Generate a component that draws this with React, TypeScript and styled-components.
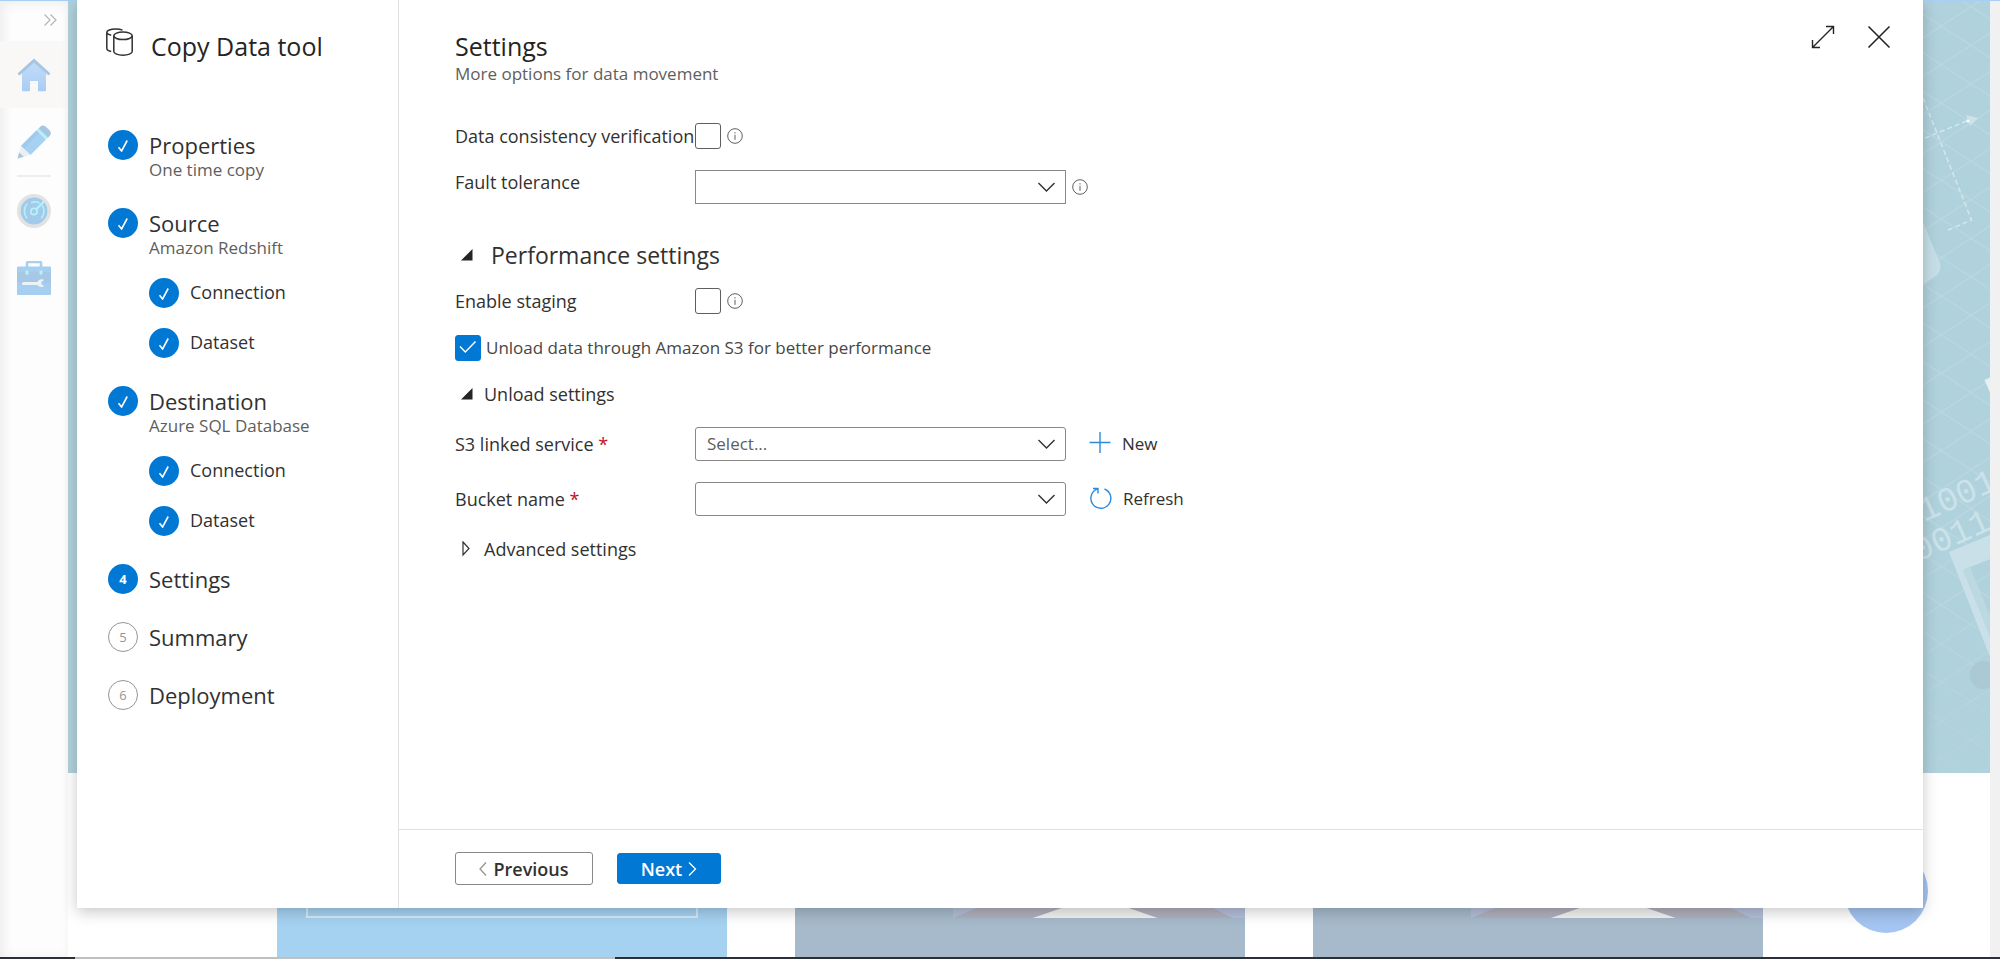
import React from "react";
import styled, { createGlobalStyle, css } from "styled-components";

const GlobalStyle = createGlobalStyle`
  *, *::before, *::after { box-sizing: border-box; }
  body {
    margin: 0;
    background: #fff;
    color: #323130;
    font-family: "Open Sans", "Noto Sans", sans-serif;
    font-size: 17px;
    line-height: 24px;
  }
  button, select, input { font: inherit; color: inherit; }
  h1, h2, h3, p, ol { margin: 0; padding: 0; font: inherit; list-style: none; }
`;

/* ---------- Page behind the dialog ---------- */

const Page = styled.div`
  position: relative;
  display: flex;
  flex-direction: column;
  min-height: 100vh;
  overflow: hidden;
`;

const TopEdge = styled.div`
  height: 1px;
  background: #a5d0f3;
`;

const Workspace = styled.div`
  flex: 1;
  display: flex;
`;

const Rail = styled.nav`
  width: 68px;
  display: flex;
  flex-direction: column;
  background: #fdfdfd;
  box-shadow: inset 3px 2px 12px #ececec;
`;

const RailButton = styled.button<{ $active?: boolean }>`
  width: 67px;
  height: 67px;
  padding: 0;
  display: grid;
  place-items: center;
  border: 0;
  background: ${(p) => (p.$active ? "#faf8f7" : "transparent")};
`;

const RailToggle = styled.button`
  height: 40px;
  padding: 0 11px 2px 0;
  display: flex;
  align-items: center;
  justify-content: flex-end;
  border: 0;
  background: transparent;
`;

const RailDivider = styled.hr`
  width: 34px;
  height: 2px;
  margin: 0 17px;
  border: 0;
  background: #eeeeee;
`;

const Home = styled.div`
  flex: 1;
  display: flex;
  flex-direction: column;
`;

const Hero = styled.div`
  flex: 1;
  display: flex;
  justify-content: flex-end;
  background: #b0d2dc;

  svg {
    overflow: visible;
  }
`;

const Cards = styled.div`
  display: flex;
  gap: 68px;
  height: 184px;
  padding: 68px 227px 0 209px;
`;

const Card = styled.div<{ $tone: string }>`
  flex: 1;
  display: flex;
  align-items: flex-start;
  justify-content: flex-end;
  background: ${(p) => p.$tone};
`;

const CardOutline = styled.div`
  flex: 1;
  height: 77px;
  margin: 0 29px;
  border: 2px solid #d5e9f8;
`;

const ScrollTrack = styled.div`
  position: relative;
  width: 10px;
  background: #f1f1f1;
`;

const Taskbar = styled.div`
  height: 2px;
  display: flex;
  background: #2b3036;
`;

const TaskbarItem = styled.div`
  width: 27%;
  margin-left: 75px;
  background: #c0c0c0;
`;

const ChatBubble = styled.div`
  position: absolute;
  right: 72px;
  bottom: 26px;
  width: 84px;
  height: 84px;
  border-radius: 50%;
  background: #a4c4f1;
`;

/* ---------- Dialog ---------- */

const Dialog = styled.section`
  position: absolute;
  inset: 0 77px 51px;
  display: flex;
  background: #fff;
  box-shadow: 0 4px 14px rgba(0, 0, 0, 0.22);
`;

const Sidebar = styled.aside`
  width: 322px;
  flex: none;
  padding: 28px 0 0 28px;
  border-right: 1px solid #e1e1e1;
`;

const ToolHeader = styled.header`
  display: flex;
  gap: 17px;
  height: 102px;
`;

const ToolTitle = styled.h1`
  margin-top: 3px;
  font-size: 25px;
  line-height: 30px;
  font-weight: 500;
  color: #252423;
`;

const Steps = styled.ol`
  display: flex;
  flex-direction: column;
  gap: 28px;
  padding-left: 3px;
`;

const Step = styled.li`
  display: grid;
  grid-template-columns: 30px 1fr;
  column-gap: 11px;
`;

const SubSteps = styled.ol`
  grid-column: 2;
  display: flex;
  flex-direction: column;
  gap: 20px;
  margin-top: 20px;
`;

const Badge = styled.span<{ $state: "done" | "current" | "todo" }>`
  width: 30px;
  height: 30px;
  display: grid;
  place-items: center;
  border-radius: 50%;
  font-size: 13px;
  line-height: 16px;
  ${(p) =>
    p.$state === "todo"
      ? css`
          border: 1px solid #979593;
          color: #979593;
        `
      : css`
          background: #0078d4;
          color: #fff;
          font-weight: 700;
        `}
`;

const StepTitle = styled.div<{ $sub?: boolean }>`
  font-size: ${(p) => (p.$sub ? 18 : 22)}px;
  line-height: ${(p) => (p.$sub ? 28 : 30)}px;
  font-weight: 500;
`;

const StepNote = styled.div`
  grid-column: 2;
  line-height: 20px;
  color: #605e5c;
`;

const Main = styled.main`
  flex: 1;
  display: flex;
  flex-direction: column;
`;

const Heading = styled.header`
  display: flex;
  justify-content: space-between;
  padding: 21px 28px 0 56px;
`;

const Title = styled.h2`
  margin-top: 10px;
  font-size: 25px;
  line-height: 30px;
  font-weight: 500;
  color: #252423;
`;

const Subtitle = styled.p`
  line-height: 26px;
  color: #605e5c;
`;

const WindowActions = styled.div`
  display: flex;
  gap: 24px;
`;

const IconButton = styled.button`
  width: 32px;
  height: 32px;
  padding: 0;
  display: grid;
  place-items: center;
  border: 0;
  background: transparent;
`;

const Form = styled.form`
  flex: 1;
  display: flex;
  flex-direction: column;
  align-items: flex-start;
  gap: 21px;
  padding: 36px 56px 0;
`;

const Row = styled.div<{ $labelTop?: boolean }>`
  display: grid;
  grid-template-columns: 240px auto auto;
  align-items: center;

  > label {
    align-self: ${(p) => (p.$labelTop ? "start" : "center")};
  }
`;

const Label = styled.label`
  font-size: 18px;
  font-weight: 500;
  white-space: nowrap;
`;

const Required = styled.span`
  color: #c50f1f;
`;

const CheckWrap = styled.span`
  position: relative;
  display: block;
  width: 26px;
  height: 26px;

  svg {
    position: absolute;
    inset: 0;
    pointer-events: none;
  }
`;

const CheckInput = styled.input`
  appearance: none;
  display: block;
  width: 26px;
  height: 26px;
  margin: 0;
  border: 1px solid #605e5c;
  border-radius: 3px;
  background: #fff;

  &:checked {
    border-color: #0078d4;
    background: #0078d4;
  }
`;

const CheckRow = styled.div`
  display: flex;
  align-items: center;
  gap: 5px;
  color: #484644;
`;

const SelectWrap = styled.span`
  position: relative;
  display: block;

  svg {
    position: absolute;
    right: 10px;
    top: 10px;
    pointer-events: none;
  }
`;

const SelectInput = styled.select<{ $square?: boolean }>`
  appearance: none;
  display: block;
  width: 371px;
  height: 34px;
  padding: 0 36px 0 11px;
  border: 1px solid #8a8886;
  border-radius: ${(p) => (p.$square ? 0 : 3)}px;
  background: #fff;
  color: #605e5c;
`;

const InfoButton = styled.button`
  width: 16px;
  height: 16px;
  margin-left: 6px;
  padding: 0;
  border: 0;
  background: transparent;

  svg {
    display: block;
  }
`;

const LinkButton = styled.button`
  display: flex;
  align-items: center;
  gap: 11px;
  margin-left: 23px;
  padding: 0;
  border: 0;
  background: transparent;
`;

const SectionToggle = styled.button<{ $large?: boolean }>`
  display: flex;
  align-items: center;
  gap: ${(p) => (p.$large ? 18 : 11)}px;
  height: 24px;
  margin-top: ${(p) => (p.$large ? 18 : 0)}px;
  padding: 0 0 0 6px;
  border: 0;
  background: transparent;
  font-size: ${(p) => (p.$large ? 23 : 18)}px;
  font-weight: 500;
`;

const Footer = styled.footer`
  display: flex;
  align-items: center;
  gap: 24px;
  height: 79px;
  padding: 0 56px 1px;
  border-top: 1px solid #e1e1e1;
`;

const FooterButton = styled.button<{ $primary?: boolean }>`
  display: flex;
  align-items: center;
  justify-content: center;
  gap: 6px;
  width: ${(p) => (p.$primary ? 104 : 138)}px;
  height: ${(p) => (p.$primary ? 31 : 33)}px;
  padding: 0;
  border: 1px solid ${(p) => (p.$primary ? "#0078d4" : "#8a8886")};
  border-radius: 3px;
  background: ${(p) => (p.$primary ? "#0078d4" : "#fff")};
  color: ${(p) => (p.$primary ? "#fff" : "#323130")};
  font-size: 18px;
  font-weight: 600;
`;

/* ---------- Icons ---------- */

const DatabaseIcon = () => (
  <svg width="29" height="28" viewBox="0 0 29 28" fill="none" stroke="#323130" strokeWidth="1.5">
    <ellipse cx="18" cy="7.8" rx="9.2" ry="3.8" />
    <path d="M8.8 7.8V23.600c0 2 4.100 3.600 9.200 3.600s9.200-1.600 9.200-3.600V7.800" />
    <path d="M17.500 2.200C15.500 1.200 13 1 10.500 1 5.500 1 1.800 2.500 1.800 4.300V20.500c0 1.400 1.800 2.400 4.400 3M1.800 4.300c0 1.400 1.800 2.300 4.400 2.900" />
  </svg>
);

const BadgeCheck = () => (
  <svg width="12" height="14" viewBox="0 0 12 14" fill="none" stroke="#fff" strokeWidth="1.600">
    <path d="M1.500 9.200 4.600 13 10.200 2.500" />
  </svg>
);

const BoxCheck = () => (
  <svg width="26" height="26" viewBox="0 0 26 26" fill="none" stroke="#fff" strokeWidth="1.500">
    <path d="M5 11.500 10.300 17 20.500 6.500" />
  </svg>
);

const Chevron = () => (
  <svg width="19" height="14" viewBox="0 0 19 14" fill="none" stroke="#323130" strokeWidth="1.400">
    <path d="M1.500 3 9.500 11 17.500 3" />
  </svg>
);

const InfoIcon = () => (
  <svg width="16" height="16" viewBox="0 0 16 16" fill="none" stroke="#605e5c">
    <circle cx="8" cy="8" r="7.300" />
    <path d="M8 6.800V11.800M8 4.200V5.500" />
  </svg>
);

const ExpandedIcon = () => (
  <svg width="12" height="12" viewBox="0 0 12 12">
    <path d="M11.500 0V11.500H0Z" fill="#252423" />
  </svg>
);

const CollapsedIcon = () => (
  <svg width="12" height="16" viewBox="0 0 12 16" fill="none" stroke="#323130" strokeWidth="1.200">
    <path d="M2 1 8 7.500 2 14Z" />
  </svg>
);

const PlusIcon = () => (
  <svg width="22" height="24" viewBox="0 0 22 24" stroke="#2b8bde" strokeWidth="1.400">
    <path d="M11 0V21M0.500 10.500H21.500" />
  </svg>
);

const RefreshIcon = () => (
  <svg width="23" height="24" viewBox="0 0 23 24" fill="none" stroke="#2b8bde" strokeWidth="1.400">
    <path d="M15.500 2A10 10 0 1 1 8.500 1.900" />
    <path d="M4 1.500H9V6.500" />
  </svg>
);

const ExpandIcon = () => (
  <svg width="24" height="24" viewBox="0 0 24 24" fill="none" stroke="#252423" strokeWidth="1.400">
    <path d="M1.500 22.500 22.500 1.500M15 1.500H22.500V9M1.500 15V22.500H9" />
  </svg>
);

const CloseIcon = () => (
  <svg width="24" height="24" viewBox="0 0 24 24" stroke="#252423" strokeWidth="1.600">
    <path d="M1.500 1.500 22.500 22.500M22.500 1.500 1.500 22.500" />
  </svg>
);

const ArrowLeft = () => (
  <svg width="8" height="16" viewBox="0 0 8 16" fill="none" stroke="#979593" strokeWidth="1.300">
    <path d="M7 1.500 1 8 7 14.500" />
  </svg>
);

const ArrowRight = () => (
  <svg width="9" height="16" viewBox="0 0 9 16" fill="none" stroke="#fff" strokeWidth="1.300">
    <path d="M1 1.500 7.500 8 1 14.500" />
  </svg>
);

const DoubleChevron = () => (
  <svg width="14" height="12" viewBox="0 0 14 12" fill="none" stroke="#b5b5b5" strokeWidth="1.200">
    <path d="M1.500 0.500 7 6 1.500 11.500M7.500 0.500 13 6 7.500 11.500" />
  </svg>
);

const HomeIcon = () => (
  <svg width="34" height="34" viewBox="0 0 34 34">
    <defs>
      <linearGradient id="house" x1="0" y1="0" x2="0" y2="1">
        <stop offset="0" stopColor="#c2dcfa" />
        <stop offset="1" stopColor="#a8cdf3" />
      </linearGradient>
    </defs>
    <path d="M5 15 17 4 29 15V32.500a.8.8 0 0 1-.8.8H21V23H13V33.300H5.800a.8.800 0 0 1-.8-.800Z" fill="url(#house)" />
    <path d="M17 .5 33.500 15.500 31.500 17.500 17 4.800 2.500 17.500.5 15.500Z" fill="#a6c6e2" />
  </svg>
);

const PencilIcon = () => (
  <svg width="34" height="34" viewBox="0 0 34 34">
    <path d="M23.500 1.500C25 0 27 .1 28.500 1.500L32.800 5.500C34.200 7 34.200 9 33 10.500L30.500 13.200 20.500 4.400Z" fill="#a6c6e2" />
    <path d="M21.500 3.400 31 12.400 29 14.400 19.400 5.500Z" fill="#b8f0f8" />
    <path d="M19.400 5.500 29 14.400 13.500 30 4 21Z" fill="#a6d1f2" />
    <path d="M19.400 5.500 22 8 7 23.800 4 21Z" fill="#a2c9ea" />
    <path d="M4 21 13.500 30 .500 33.500Z" fill="#eceef0" />
    <path d="M2.200 27.500 6.800 31.800 .500 33.500Z" fill="#a6c6e2" />
  </svg>
);

const GaugeIcon = () => (
  <svg width="34" height="34" viewBox="0 0 34 34" fill="none">
    <circle cx="17" cy="17" r="15.200" fill="#a2caea" stroke="#e2e2e2" strokeWidth="3.600" />
    <path d="M14 8.800C16.500 7.700 20 7.800 22.500 9M10.300 9.500C6.500 13.500 6.500 20 10 24.500M25.200 11.500C27.800 15 27.500 20.500 24.200 24.500" stroke="#b5eef8" strokeWidth="1.700" />
    <circle cx="17" cy="17.500" r="3.100" stroke="#b5f1f9" strokeWidth="1.800" />
    <path d="M19.200 15.200 27 7.500" stroke="#b5f1f9" strokeWidth="2.300" />
  </svg>
);

const ToolboxIcon = () => (
  <svg width="34" height="34" viewBox="0 0 34 34">
    <path d="M10 7V2.200Q10 1 11.200 1H22.800Q24 1 24 2.200V7" fill="none" stroke="#a6d0f0" strokeWidth="2.600" />
    <rect x="0" y="5.500" width="34" height="28.500" rx="1" fill="#a5cef0" />
    <rect x="0" y="11" width="34" height="11" fill="#a6c8e5" />
    <path d="M8.500 9.500H11.500V13L10 14 8.500 13ZM22.500 9.500H25.500V13L24 14 22.500 13Z" fill="#b6f0f8" />
    <path d="M6.500 21H20.500C21.500 18.300 25 17.500 27.300 18.900L24.500 20.800V23.400L27.300 25.300C25 26.700 21.500 25.800 20.500 24H6.500A1.500 1.500 0 0 1 6.500 21Z" fill="#edf2f7" />
  </svg>
);

const HeroArt = () => (
  <svg width="67" height="772" viewBox="0 0 67 772" aria-hidden="true">
    <defs>
      <pattern id="grid" x="18.300" y="25" width="59.400" height="38.600" patternUnits="userSpaceOnUse">
        <path d="M0 0 59.400 38.600M0 38.600 59.400 0" stroke="#bfdae3" strokeWidth="1" />
      </pattern>
      <linearGradient id="fade" x1="0" y1="0" x2="0" y2="1">
        <stop offset="0.700" stopColor="#fff" />
        <stop offset="1" stopColor="#fff" stopOpacity="0.350" />
      </linearGradient>
      <mask id="gridMask">
        <rect width="67" height="772" fill="url(#fade)" />
      </mask>
    </defs>
    <rect width="67" height="772" fill="url(#grid)" mask="url(#gridMask)" />
    <g fill="none" stroke="#d3e7ec" strokeWidth="1.500" strokeDasharray="5 3">
      <path d="M0 97 48.500 219 23 230" />
      <path d="M2 137 46 119" />
    </g>
    <path d="M43 114 55 117 47 125Z" fill="#cde3ea" />
    <circle cx="45" cy="120" r="1.500" fill="#fff" />
    <path d="M0 221 17 262Q19 268 14 274L0 284Z" fill="#c6dfe7" />
    <path d="M61.500 379 68 376V394Z" fill="#e4f0f4" />
    <g fill="#cbe2ea" fontFamily="Liberation Mono, monospace" fontSize="34">
      <text transform="translate(1 521) rotate(-24)">1001</text>
      <text transform="translate(-5 561) rotate(-24)">0011</text>
    </g>
    <path d="M26 551 67 534V558L40 569 67 634V656Z" fill="#c9e0e8" />
    <path d="M40 569 47 566 67 615V636Z" fill="#bcd9e2" />
    <path d="M67 661.500A14 14 0 1 0 67 686.500Z" fill="#abc9d4" />
  </svg>
);

const CardArt = () => (
  <svg width="65%" height="77" viewBox="0 0 293 77" preserveAspectRatio="none" aria-hidden="true">
    <rect width="293" height="77" fill="#b4bfda" />
    <path d="M0 77 70 48H223L280 77Z" fill="#b0b1bd" />
    <path d="M80 77 135 58H150L205 77Z" fill="#f3f3f3" />
  </svg>
);

/* ---------- Pieces ---------- */

type CheckboxProps = { id: string; checked?: boolean };

const Checkbox = ({ id, checked = false }: CheckboxProps) => {
  const [on, setOn] = React.useState(checked);
  return (
    <CheckWrap>
      <CheckInput id={id} type="checkbox" checked={on} onChange={() => setOn(!on)} />
      {on && <BoxCheck />}
    </CheckWrap>
  );
};

type SelectProps = { id: string; placeholder?: string; square?: boolean };

const Select = ({ id, placeholder = "", square }: SelectProps) => (
  <SelectWrap>
    <SelectInput id={id} $square={square} defaultValue="">
      <option value="">{placeholder}</option>
    </SelectInput>
    <Chevron />
  </SelectWrap>
);

const Info = () => (
  <InfoButton type="button" aria-label="More information">
    <InfoIcon />
  </InfoButton>
);

type StepData = {
  title: string;
  note?: string;
  state: "done" | "current" | "todo";
  children?: string[];
};

const steps: StepData[] = [
  { title: "Properties", note: "One time copy", state: "done" },
  { title: "Source", note: "Amazon Redshift", state: "done", children: ["Connection", "Dataset"] },
  { title: "Destination", note: "Azure SQL Database", state: "done", children: ["Connection", "Dataset"] },
  { title: "Settings", state: "current" },
  { title: "Summary", state: "todo" },
  { title: "Deployment", state: "todo" },
];

const StepList = () => (
  <Steps>
    {steps.map((step, index) => (
      <Step key={step.title}>
        <Badge $state={step.state}>{step.state === "done" ? <BadgeCheck /> : index + 1}</Badge>
        <StepTitle>{step.title}</StepTitle>
        {step.note && <StepNote>{step.note}</StepNote>}
        {step.children && (
          <SubSteps>
            {step.children.map((child) => (
              <Step key={child}>
                <Badge $state="done">
                  <BadgeCheck />
                </Badge>
                <StepTitle $sub>{child}</StepTitle>
              </Step>
            ))}
          </SubSteps>
        )}
      </Step>
    ))}
  </Steps>
);

export default function App() {
  return (
    <>
      <GlobalStyle />
      <Page>
        <TopEdge />
        <Workspace>
          <Rail aria-label="Main">
            <RailToggle aria-label="Expand menu">
              <DoubleChevron />
            </RailToggle>
            <RailButton $active aria-label="Home">
              <HomeIcon />
            </RailButton>
            <RailButton aria-label="Author">
              <PencilIcon />
            </RailButton>
            <RailDivider />
            <RailButton aria-label="Monitor">
              <GaugeIcon />
            </RailButton>
            <RailButton aria-label="Manage">
              <ToolboxIcon />
            </RailButton>
          </Rail>
          <Home>
            <Hero>
              <HeroArt />
            </Hero>
            <Cards>
              <Card $tone="#a5d2f1">
                <CardOutline />
              </Card>
              <Card $tone="#a6bacb">
                <CardArt />
              </Card>
              <Card $tone="#a6bacb">
                <CardArt />
              </Card>
            </Cards>
          </Home>
          <ScrollTrack />
        </Workspace>
        <Taskbar>
          <TaskbarItem />
        </Taskbar>
        <ChatBubble />

        <Dialog role="dialog" aria-labelledby="tool-title">
          <Sidebar>
            <ToolHeader>
              <DatabaseIcon />
              <ToolTitle id="tool-title">Copy Data tool</ToolTitle>
            </ToolHeader>
            <StepList />
          </Sidebar>
          <Main>
            <Heading>
              <div>
                <Title>Settings</Title>
                <Subtitle>More options for data movement</Subtitle>
              </div>
              <WindowActions>
                <IconButton aria-label="Expand">
                  <ExpandIcon />
                </IconButton>
                <IconButton aria-label="Close">
                  <CloseIcon />
                </IconButton>
              </WindowActions>
            </Heading>
            <Form>
              <Row>
                <Label htmlFor="consistency">Data consistency verification</Label>
                <Checkbox id="consistency" />
                <Info />
              </Row>
              <Row $labelTop>
                <Label htmlFor="fault">Fault tolerance</Label>
                <Select id="fault" square />
                <Info />
              </Row>
              <SectionToggle type="button" $large aria-expanded="true">
                <ExpandedIcon />
                Performance settings
              </SectionToggle>
              <Row>
                <Label htmlFor="staging">Enable staging</Label>
                <Checkbox id="staging" />
                <Info />
              </Row>
              <CheckRow>
                <Checkbox id="unload" checked />
                <label htmlFor="unload">Unload data through Amazon S3 for better performance</label>
              </CheckRow>
              <SectionToggle type="button" aria-expanded="true">
                <ExpandedIcon />
                Unload settings
              </SectionToggle>
              <Row>
                <Label htmlFor="service">
                  S3 linked service <Required>*</Required>
                </Label>
                <Select id="service" placeholder="Select..." />
                <LinkButton type="button">
                  <PlusIcon />
                  New
                </LinkButton>
              </Row>
              <Row>
                <Label htmlFor="bucket">
                  Bucket name <Required>*</Required>
                </Label>
                <Select id="bucket" />
                <LinkButton type="button">
                  <RefreshIcon />
                  Refresh
                </LinkButton>
              </Row>
              <SectionToggle type="button" aria-expanded="false">
                <CollapsedIcon />
                Advanced settings
              </SectionToggle>
            </Form>
            <Footer>
              <FooterButton type="button">
                <ArrowLeft />
                Previous
              </FooterButton>
              <FooterButton type="button" $primary>
                Next
                <ArrowRight />
              </FooterButton>
            </Footer>
          </Main>
        </Dialog>
      </Page>
    </>
  );
}
